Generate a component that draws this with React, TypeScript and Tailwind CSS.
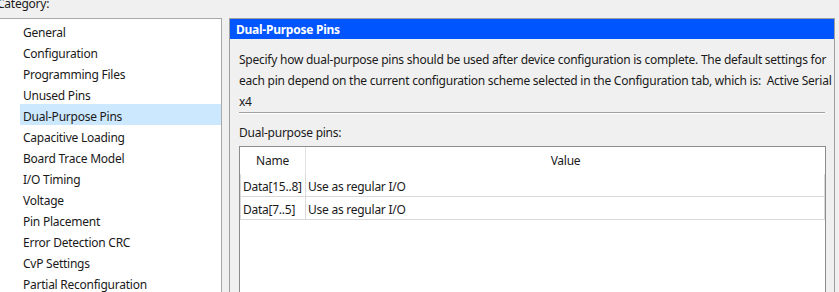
import React from "react";

const categories = [
  "General",
  "Configuration",
  "Programming Files",
  "Unused Pins",
  "Dual-Purpose Pins",
  "Capacitive Loading",
  "Board Trace Model",
  "I/O Timing",
  "Voltage",
  "Pin Placement",
  "Error Detection CRC",
  "CvP Settings",
  "Partial Reconfiguration",
];

const pins = [
  { name: "Data[15..8]", value: "Use as regular I/O" },
  { name: "Data[7..5]", value: "Use as regular I/O" },
];

export default function App() {
  const selected = "Dual-Purpose Pins";

  return (
    <div
      className="w-[839px] h-[292px] overflow-hidden bg-[#f0f0f0] text-[12px] tracking-[-0.25px] text-[#1a1a1a] flex flex-col"
      style={{ fontFamily: '"Noto Sans", "Open Sans", sans-serif' }}
    >
      {/* Category label (partly scrolled out of view) */}
      <div className="h-[18px] shrink-0">
        <div className="-mt-[7px] -ml-[3px] leading-[21px]">Category:</div>
      </div>

      <div className="flex flex-1 min-h-0">
        {/* Category tree */}
        <div className="w-[222px] shrink-0 bg-white border-t border-r border-[#a9a9a9] pt-[1px]">
          {categories.map((c) => (
            <div
              key={c}
              className={`ml-[20px] h-[21px] leading-[25px] pl-[3px] whitespace-nowrap ${
                c === selected ? "bg-[#cce8ff]" : ""
              }`}
            >
              {c}
            </div>
          ))}
        </div>

        {/* Settings page */}
        <div className="ml-[7px] w-[606px] shrink-0 border-t border-l border-r border-[#a0a0a0] flex flex-col">
          <div className="h-[20px] bg-[#0055ff] text-white font-bold leading-[21px] pl-[6px]">
            Dual-Purpose Pins
          </div>

          <div className="pl-[9px] pr-[9px] pt-[10px]">
            <p className="leading-[21px] whitespace-pre">
              {"Specify how dual-purpose pins should be used after device configuration is complete. The default settings for\neach pin depend on the current configuration scheme selected in the Configuration tab, which is:  Active Serial\nx4"}
            </p>
            <div className="h-[2px] border-t border-[#a0a0a0] border-b border-b-white" />

            <div className="mt-[8px] leading-[21px]">Dual-purpose pins:</div>

            <div className="mt-[3px] w-[587px] h-[200px] bg-white border border-[#8c8c8c]">
              <div className="flex h-[27px] items-center">
                <div className="w-[66px] text-center border-r border-[#e3e3e3] h-full leading-[27px]">Name</div>
                <div className="flex-1 text-center leading-[27px]">Value</div>
              </div>
              {pins.map((p) => (
                <div key={p.name} className="flex h-[23px] border-b border-l border-r border-[#d9d9d9]">
                  <div className="w-[65px] border-r border-[#d9d9d9] leading-[25px] pl-[2px] whitespace-nowrap">
                    {p.name}
                  </div>
                  <div className="flex-1 leading-[25px] pl-[2px]">{p.value}</div>
                </div>
              ))}
            </div>
          </div>
        </div>
      </div>
    </div>
  );
}
